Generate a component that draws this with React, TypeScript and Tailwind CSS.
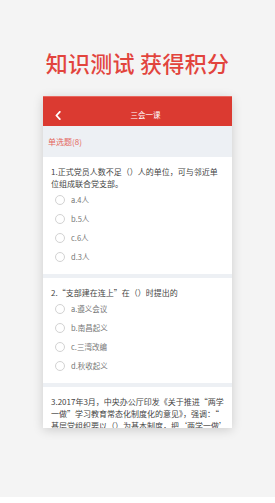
import React from "react";

const font = { fontFamily: '"Noto Sans CJK SC", "Noto Sans", sans-serif' };

function Option({ label }: { label: string }) {
  return (
    <div className="flex items-center h-[19.25px] pl-[4px]">
      <div className="w-[10px] h-[10px] rounded-full border border-[#d2d2d2] bg-white shrink-0" />
      <span className="ml-[6px] text-[7.5px] leading-[10px] text-[#777] whitespace-nowrap">{label}</span>
    </div>
  );
}

function Question({ lines, options }: { lines: string[]; options?: string[] }) {
  return (
    <div className="bg-white pt-[9px] pb-[7px] px-[8px]">
      <div className="text-[8px] leading-[12px] text-[#444]">
        {lines.map((l, i) => (
          <div key={i} className="whitespace-nowrap">{l}</div>
        ))}
      </div>
      {options && (
        <div className="flex flex-col">
          {options.map((o) => (
            <Option key={o} label={o} />
          ))}
        </div>
      )}
    </div>
  );
}

export default function App() {
  return (
    <div
      className="w-[275px] h-[503px] bg-[#f4f4f4] flex flex-col items-center overflow-hidden"
      style={font}
    >
      <div className="mt-[50px] text-[22px] leading-[24px] font-medium text-[#e2443d] whitespace-nowrap tracking-[0.3px]">
        知识测试 获得积分
      </div>
      <div className="mt-[22px] w-[189px] h-[332px] bg-white overflow-hidden shadow-[0_2px_10px_rgba(0,0,0,0.16)] flex flex-col">
        <div className="h-[30px] bg-[#db3a31] border-t border-[#e8675f] pt-[7px] shrink-0">
          <div className="h-[22px] flex items-center">
            <div className="w-[30px] flex justify-end pr-[12px]">
              <svg width="6" height="9" viewBox="0 0 6 9">
                <path d="M4.8 0.8 L1.4 4.5 L4.8 8.2" fill="none" stroke="#fff" strokeWidth="1.8" strokeLinecap="round" strokeLinejoin="round" />
              </svg>
            </div>
            <div className="flex-1 text-center text-white text-[7.5px] leading-[10px]">三会一课</div>
            <div className="w-[14px]" />
          </div>
        </div>
        <div className="h-[31px] bg-[#edf0f4] flex items-center pl-[5px] shrink-0">
          <span className="text-[8px] leading-[10px] text-[#e4675c]">单选题(8)</span>
        </div>
        <Question
          lines={["1.正式党员人数不足（）人的单位，可与邻近单", "位组成联合党支部。"]}
          options={["a.4人", "b.5人", "c.6人", "d.3人"]}
        />
        <div className="h-[4px] bg-[#edf0f4] shrink-0" />
        <Question
          lines={["2.“支部建在连上”在（）时提出的"]}
          options={["a.遵义会议", "b.南昌起义", "c.三湾改编", "d.秋收起义"]}
        />
        <div className="h-[4px] bg-[#edf0f4] shrink-0" />
        <Question
          lines={[
            "3.2017年3月，中央办公厅印发《关于推进“两学",
            "一做”学习教育常态化制度化的意见》，强调：“",
            "基层党组织要以（）为基本制度，把‘两学一做’",
          ]}
        />
      </div>
      <div className="flex-1" />
      <div className="w-full h-[6px] bg-white" />
    </div>
  );
}
